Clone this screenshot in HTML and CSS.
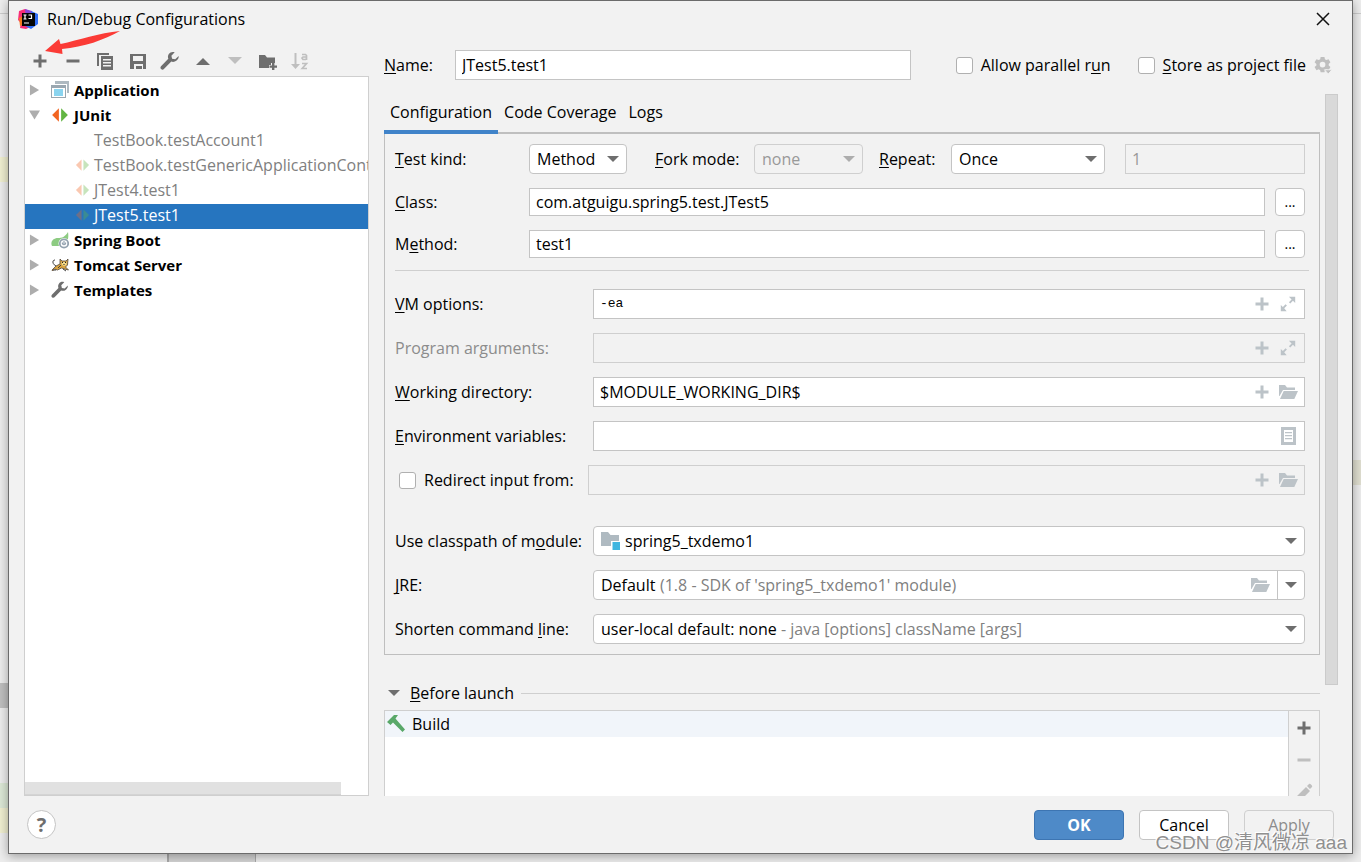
FILE: index.html
```html
<!DOCTYPE html>
<html lang="en">
<head>
<meta charset="utf-8">
<title>Run/Debug Configurations</title>
<link rel="stylesheet" href="styles.css">
</head>
<body>
<svg class="defs" aria-hidden="true">
  <symbol id="plus" viewBox="0 0 20 20"><path d="M8.500 3.500h3v5h5v3h-5v5h-3v-5h-5v-3h5z"/></symbol>
  <symbol id="minus" viewBox="0 0 20 20"><path d="M3.500 8.500h13v3h-13z"/></symbol>
  <symbol id="wrench" viewBox="0 0 20 20"><path d="M18.700 5.100l-3.500 3.200-3.100-.6-.7-2.900 3.300-3.500c-2.200-.8-4.600-.2-5.900 1.700-1 1.500-1.100 3.200-.5 4.700l-7.300 7.500c-.8.9-.7 2 .1 2.800s2 .9 2.800.1l7.400-7.500c1.700.6 3.700.3 5.300-1 1.500-1.200 2.300-2.900 2.100-4.500z"/></symbol>
  <symbol id="down" viewBox="0 0 12 8"><path d="M0 1h12L6 7z"/></symbol>
  <symbol id="right" viewBox="0 0 12 12"><path d="M1 0l10 6-10 6z"/></symbol>
  <symbol id="expand" viewBox="0 0 20 20"><path d="M11 2h7v7l-2.500-2.500-3 3-1.500-1.500 3-3zM2 18v-7l2.300 2.300 3-3 1.500 1.500-3 3L8.500 18z"/></symbol>
  <symbol id="folder" viewBox="0 0 20 20"><path d="M1 3h6l2 2.500h8V8H5l-3.500 6H1zM5.700 9H20l-3.700 8H2z"/></symbol>
  <symbol id="junit" viewBox="0 0 16 14"><path class="orange" d="M7 1v12L1 7z"/><path class="green" d="M9 1v12l6-6z"/></symbol>
</svg>

<div class="backdrop" aria-hidden="true">
  <i class="rule-top"></i><i class="mark mark-cream"></i><i class="mark mark-grey"></i><i class="mark mark-green"></i><i class="mark mark-yellow"></i><i class="mark mark-right"></i><i class="mark-bottom"></i>
</div>

<main class="dialog">
  <header class="titlebar">
    <svg class="logo" viewBox="0 0 20 20"><path fill="#f92d78" d="M1 2l6-2 7 3 2 13-8 4-6-1 1-5-3-3z"/><path fill="#f47b20" d="M1 9l4-2 2 8-5 2z"/><path fill="#8b45d8" d="M7 0l7 2 3 8-9 0z"/><path fill="#306df5" d="M13 2l7 3v10l-7 5-6-3 8-3z"/><path fill="#050505" d="M4 4h13v13H4z"/><path fill="none" stroke="#fff" stroke-width="1.200" d="M5.500 6h3M7 6v4M5.500 10h3M10.500 6h3v3.500h-3M6 14h5"/></svg>
    <h1>Run/Debug Configurations</h1>
    <button class="close" aria-label="Close"><svg viewBox="0 0 14 14"><path d="M1 1l12 12M13 1L1 13"/></svg></button>
  </header>

  <div class="body">
    <aside class="side">
      <div class="toolbar">
        <button aria-label="Add"><svg><use href="#plus"/></svg></button>
        <button aria-label="Remove"><svg><use href="#minus"/></svg></button>
        <button aria-label="Copy"><svg viewBox="0 0 20 20"><path d="M2 2h12v2H4v11H2z"/><path fill-rule="evenodd" d="M6 5h12v14H6zM8 8v1.500h8V8zm0 3v1.500h8V11zm0 3v1.500h8V14z"/></svg></button>
        <button aria-label="Save"><svg viewBox="0 0 20 20"><path fill-rule="evenodd" d="M2 3h16v15H2zM5 5v5h10V5zm1 8v5h2v-3h6v3h1v-5z"/><path d="M9 16h3v2H9z"/></svg></button>
        <button aria-label="Edit templates"><svg><use href="#wrench"/></svg></button>
        <button aria-label="Move up"><svg viewBox="0 0 20 20"><path d="M3 14l7-7 7 7z"/></svg></button>
        <button aria-label="Move down" disabled><svg viewBox="0 0 20 20"><path d="M3 6h14l-7 7z"/></svg></button>
        <button aria-label="Create folder"><svg viewBox="0 0 20 20"><path d="M1 4h6l2 2.500h8V12h-4v2h-2v3H1z"/><path d="M14 12h2.400v2.500H19v2.300h-2.600V19H14v-2.200h-2.500v-2.300H14z"/></svg></button>
        <button aria-label="Sort" disabled><svg viewBox="0 0 20 20"><path d="M4.500 2h2v11H10l-4.500 5L1 13h3.500z"/><path fill="none" stroke="currentColor" stroke-width="1.700" d="M12 3.500h3.500l1 1V9M16.500 6h-3.500l-1 1 1 1.500h2.500l1-1M12 12.500h4.500l-4.300 5H17"/></svg></button>
      </div>
      <nav class="tree" aria-label="Configurations">
        <ul>
          <li class="group"><svg class="twist"><use href="#right"/></svg><svg class="icon" viewBox="0 0 18 18"><path fill="#aeb9c0" d="M4 0h14v12h-2V3H4z"/><path fill="#9aa7b0" fill-rule="evenodd" d="M0 4h15v13H0zM1 7v9h13V7z"/><path fill="#fff" d="M1 7h13v9H1z"/><path fill="#8ad4ef" d="M3 8h9v7H3z"/></svg><span>Application</span></li>
          <li class="group"><svg class="twist open" viewBox="0 0 12 12"><path d="M0 1h12L6 11z"/></svg><svg class="icon"><use href="#junit"/></svg><span>JUnit</span></li>
          <li class="leaf"><svg class="hidden"></svg><span>TestBook.testAccount1</span></li>
          <li class="leaf"><svg><use href="#junit"/></svg><span>TestBook.testGenericApplicationContext</span></li>
          <li class="leaf"><svg><use href="#junit"/></svg><span>JTest4.test1</span></li>
          <li class="leaf selected"><svg><use href="#junit"/></svg><span>JTest5.test1</span></li>
          <li class="group"><svg class="twist"><use href="#right"/></svg><svg class="icon" viewBox="0 0 18 18"><path fill="#8dcb82" d="M17 1c1 6 0 13-8 14H1c-2-4 1-8 6-8 4 0 7-1 10-6z"/><circle cx="13" cy="12.500" r="5.500" fill="#fff"/><circle cx="13" cy="12.500" r="4.200" fill="#fff" stroke="#93a2af" stroke-width="1.800"/><path fill="none" stroke="#93a2af" stroke-width="1.200" d="M11.500 11.500c-1 3 4 3 3 0M13 10v3"/></svg><span>Spring Boot</span></li>
          <li class="group"><svg class="twist"><use href="#right"/></svg><svg class="icon" viewBox="0 0 18 18"><path fill="#d9a441" stroke="#54483a" stroke-width=".8" d="M1 14l4-4 4-2V3l2 2h4l2-2-.5 6-2 2 3 3-4-1-3-1-4 2-3-1-2 2z"/><path fill="none" stroke="#444" stroke-width="1" d="M5 10C1 8 1 4 4 4M7 12l3-3M2 14h3M12 13l3 2"/><path fill="#f3da8b" d="M10.500 6h5v3l-2.500 1-2-1z"/><path fill="#222" d="M11 6h1v1h-1zm3 0h1v1h-1zm-1.500 2h1v1h-1z"/></svg><span>Tomcat Server</span></li>
          <li class="group"><svg class="twist"><use href="#right"/></svg><svg class="icon dark"><use href="#wrench"/></svg><span>Templates</span></li>
        </ul>
        <div class="hscroll"></div>
      </nav>
    </aside>

    <section class="content">
      <div class="namebar">
        <label for="name"><u>N</u>ame:</label>
        <input id="name" class="box" type="text" value="JTest5.test1">
        <label class="check parallel"><input type="checkbox"><span>Allow parallel r<u>u</u>n</span></label>
        <label class="check"><input type="checkbox"><span><u>S</u>tore as project file</span></label>
        <button class="gear" aria-label="Storage options"><svg viewBox="0 0 20 20"><path fill-rule="evenodd" d="M7 1h4l.5 2.500 1.500.8 2.300-1 2 3.400-1.800 1.700v1.500l1.800 1.700-2 3.400-2.300-1-1.500.9L11 17H7l-.5-2.100-1.500-.9-2.400 1-2-3.400 1.900-1.700V8.400L.6 6.700l2-3.400 2.400 1 1.500-.8zM9 6a3 3 0 100 6 3 3 0 000-6z"/><path stroke="#f2f2f2" d="M11 14.500h8l-4 4.500z"/></svg></button>
      </div>

      <div class="viewport">
        <div class="scrolled">
          <div class="tabs" role="tablist">
            <button role="tab" aria-selected="true">Configuration</button>
            <button role="tab" aria-selected="false">Code Coverage</button>
            <button role="tab" aria-selected="false">Logs</button>
          </div>
          <div class="pane">
            <div class="row narrow">
              <label for="kind"><u>T</u>est kind:</label>
              <div class="field combo kind"><select id="kind"><option>Method</option></select><svg class="arrow"><use href="#down"/></svg></div>
              <label class="fork-label" for="fork"><u>F</u>ork mode:</label>
              <div class="field combo fork off"><select id="fork" disabled><option>none</option></select><svg class="arrow"><use href="#down"/></svg></div>
              <label class="repeat-label" for="repeat"><u>R</u>epeat:</label>
              <div class="field combo repeat"><select id="repeat"><option>Once</option></select><svg class="arrow"><use href="#down"/></svg></div>
              <input class="box count" aria-label="Repeat count" type="text" value="1" disabled>
            </div>
            <div class="row narrow short">
              <label for="class"><u>C</u>lass:</label>
              <input id="class" class="box" type="text" value="com.atguigu.spring5.test.JTest5">
              <button class="btn more" aria-label="Choose class">...</button>
            </div>
            <div class="row narrow short">
              <label for="method">M<u>e</u>thod:</label>
              <input id="method" class="box" type="text" value="test1">
              <button class="btn more" aria-label="Choose method">...</button>
            </div>
            <hr>
            <div class="row">
              <label for="vm"><u>V</u>M options:</label>
              <div class="field"><input id="vm" class="mono" type="text" value="-ea"><button aria-label="Insert macro"><svg><use href="#plus"/></svg></button><button aria-label="Expand"><svg class="small"><use href="#expand"/></svg></button></div>
            </div>
            <div class="row">
              <label class="muted" for="args">Program arguments:</label>
              <div class="field off"><input id="args" type="text" disabled><button aria-label="Insert macro"><svg><use href="#plus"/></svg></button><button aria-label="Expand"><svg class="small"><use href="#expand"/></svg></button></div>
            </div>
            <div class="row">
              <label for="dir"><u>W</u>orking directory:</label>
              <div class="field"><input id="dir" type="text" value="$MODULE_WORKING_DIR$"><button aria-label="Insert macro"><svg><use href="#plus"/></svg></button><button aria-label="Browse"><svg><use href="#folder"/></svg></button></div>
            </div>
            <div class="row">
              <label for="env"><u>E</u>nvironment variables:</label>
              <div class="field"><input id="env" type="text"><button aria-label="Edit variables"><svg viewBox="0 0 20 20"><path fill-rule="evenodd" d="M3 1h15v18H3zM6 4v12h9V4z"/><path d="M7 6h7v1.300H7zm0 3h7v1.300H7zm0 3h7v1.300H7z"/></svg></button></div>
            </div>
            <div class="row redirect">
              <label class="check"><input type="checkbox"><span>Redirect input from:</span></label>
              <div class="field off"><input aria-label="Input file" type="text" disabled><button aria-label="Insert macro"><svg><use href="#plus"/></svg></button><button aria-label="Browse"><svg><use href="#folder"/></svg></button></div>
            </div>
            <div class="row spaced">
              <label for="module">Use classpath of m<u>o</u>dule:</label>
              <div class="field combo"><svg class="module" viewBox="0 0 20 20"><path fill="#afbac1" d="M0 1h7l2.500 3H18v6h-8v5H0z"/><path fill="#40b6e0" d="M11.500 11H19v8h-7.500z"/></svg><select id="module" class="wide"><option>spring5_txdemo1</option></select><svg class="arrow"><use href="#down"/></svg></div>
            </div>
            <div class="row">
              <label for="jre"><u>J</u>RE:</label>
              <div class="field combo split"><select id="jre"><option>Default</option></select><span class="hint">(1.8 - SDK of 'spring5_txdemo1' module)</span><button aria-label="Browse"><svg><use href="#folder"/></svg></button><span class="drop"><svg class="arrow"><use href="#down"/></svg></span></div>
            </div>
            <div class="row">
              <label for="shorten">Shorten command <u>l</u>ine:</label>
              <div class="field combo"><select id="shorten"><option>user-local default: none</option></select><span class="hint">- java [options] className [args]</span><svg class="arrow"><use href="#down"/></svg></div>
            </div>
          </div>
          <button class="before"><svg><use href="#down"/></svg><span><u>B</u>efore launch</span></button>
          <div class="tasks">
            <ul><li><svg viewBox="0 0 20 20"><path fill="#59a869" d="M1 8l7-7h4L9.500 4.500l.8 1L19 15.500 16.500 18 7 8.500 4.500 11z"/></svg><span>Build</span></li></ul>
            <div class="task-tools">
              <button aria-label="Add task"><svg><use href="#plus"/></svg></button>
              <button aria-label="Remove task" disabled><svg><use href="#minus"/></svg></button>
              <button aria-label="Edit task" disabled><svg viewBox="0 0 20 20"><path d="M3 14l9-9 4 4-9 9H3zM13 4l2-2c1-1 4 2 3 3l-2 2z"/></svg></button>
            </div>
          </div>
        </div>
        <div class="vscroll"></div>
      </div>
    </section>
  </div>

  <footer>
    <button class="help" aria-label="Help">?</button>
    <button class="btn primary">OK</button>
    <button class="btn">Cancel</button>
    <button class="btn" disabled>Apply</button>
  </footer>
</main>

<svg class="pointer" viewBox="0 0 80 26" aria-hidden="true"><path fill="#fb3b36" d="M1 20L15 8l1.500 5C35 9 55 2 76 0 60 9 40 16 18 18l.5 5z"/></svg>
<div class="watermark">CSDN @清风微凉 aaa</div>
</body>
</html>
```
FILE: styles.css
```css
* { box-sizing: border-box; }
body {
  margin: 0;
  height: 100vh;
  padding: 0 8px 8px;
  overflow: hidden;
  position: relative;
  display: flex;
  background: #ededed;
  color: #000;
  font: 16px/20px "Open Sans", "Noto Sans", sans-serif;
}
button, input, select { font: inherit; color: inherit; margin: 0; padding: 0; }
button { border: 0; background: none; }
svg { display: block; fill: currentColor; flex: none; }
ul { list-style: none; margin: 0; padding: 0; }
u { text-underline-offset: 2px; text-decoration-skip-ink: none; }
.defs { position: absolute; width: 0; height: 0; }
.orange { fill: #f26522; }
.green { fill: #62b543; }

.backdrop i { position: absolute; }
.rule-top { left: 0; right: 0; top: 13px; height: 1px; background: #ccc; }
.mark { left: 0; width: 8px; height: 25px; }
.mark-cream { top: 157px; background: #f0efd0; }
.mark-grey { top: 683px; background: #bfbfbf; }
.mark-green { top: 783px; background: #dce8d6; }
.mark-yellow { top: 808px; background: #f0efd0; }
.backdrop .mark-right { left: auto; right: 0; top: 460px; background: #e0dfd0; }
.mark-bottom { left: 167px; bottom: 0; width: 89px; height: 8px; background: #d4d4d4; border-left: 2px solid #aaa; border-right: 1px solid #aaa; }

.dialog {
  position: relative;
  flex: 1;
  min-width: 0;
  display: flex;
  flex-direction: column;
  background: #f2f2f2;
  border: 1px solid #6b6b6b;
  box-shadow: 0 2px 10px rgba(0, 0, 0, .35);
}
.titlebar { display: flex; align-items: center; height: 36px; padding: 0 22px 0 9px; }
.titlebar h1 { flex: 1; margin: 0 0 0 9px; font-size: 16px; font-weight: 400; }
.logo { width: 20px; height: 20px; }
.close svg { width: 14px; height: 14px; fill: none; stroke: #111; stroke-width: 1.5; }

.body { flex: 1; min-height: 0; display: flex; gap: 15px; padding: 0 14px 0 15px; }
.side { width: 345px; flex: none; display: flex; flex-direction: column; }
.toolbar { width: 286px; height: 39px; padding: 14px 0 5px 6px; display: flex; align-items: center; justify-content: space-between; color: #6e6e6e; }
.toolbar svg { width: 20px; height: 20px; }
.toolbar button { height: 20px; }
button:disabled { color: #bfbfbf; }
.tree { flex: 1; min-height: 0; display: flex; flex-direction: column; justify-content: space-between; padding-top: 2px; background: #fff; border: 1px solid #cfcfcf; overflow: hidden; }
.tree li { height: 25px; padding-bottom: 3px; display: flex; align-items: center; white-space: nowrap; }
.group { padding-left: 4px; font-weight: 700; font-size: 15px; }
.twist { width: 11px; height: 12px; color: #adadad; }
.group .icon { width: 18px; height: 18px; margin: 0 5px 0 11px; }
.dark { color: #6e6e6e; }
.leaf { padding-left: 50px; gap: 4px; color: #808080; }
.leaf svg { width: 15px; height: 14px; opacity: .35; }
.leaf.selected { background: #2675bf; color: #fff; }
.hscroll { width: 92%; height: 13px; background: #e1e1e1; border-bottom: 1px solid #d4d4d4; }

.content { flex: 1; min-width: 0; display: flex; flex-direction: column; }
.namebar { display: flex; align-items: center; height: 30px; margin: 13px 5px 14px 0; }
.namebar > label:first-child { width: 71px; }
.box { flex: 1; min-width: 0; height: 30px; padding: 0 6px; background: #fff; border: 1px solid #c4c4c4; border-radius: 0; }
.box:disabled { background: #f2f2f2; border-color: #cfcfcf; color: #999; }
.check { display: flex; align-items: center; gap: 8px; white-space: nowrap; }
.check input { appearance: none; width: 17px; height: 17px; background: #fff; border: 1px solid #b0b0b0; border-radius: 3px; }
.parallel { margin: 0 27px 0 45px; }
.gear { margin-left: 8px; color: #bfbfbf; }
.gear svg { width: 19px; height: 19px; }

.viewport { flex: 1; min-height: 0; overflow: hidden; display: flex; gap: 5px; }
.scrolled { flex: 1; min-width: 0; }
.vscroll { width: 13px; height: 591px; background: #d9d9d9; border: 1px solid #cbcbcb; }
.tabs { display: flex; height: 40px; border-bottom: 2px solid #bfbfbf; }
.tabs button { height: 40px; padding: 0 6px; border-bottom: 4px solid transparent; }
.tabs button[aria-selected="true"] { border-color: #4083c9; }
.pane { display: flex; flex-direction: column; gap: 14px; padding: 10px 14px 10px 10px; border: 1px solid #bfbfbf; border-top: 0; }
.row { display: flex; align-items: center; height: 30px; }
.row > label:first-child { width: 198px; flex: none; white-space: nowrap; }
.row.narrow > label:first-child { width: 134px; }
.row.redirect > label:first-child { width: 193px; padding-left: 4px; }
.row.short, .short .box, .short .btn { height: 28px; }
.row.spaced { margin-top: 17px; }
.muted { color: #8c8c8c; }
hr { width: calc(100% + 4px); margin: -2px -4px 4px 0; border: 0; border-top: 1px solid #cfcfcf; }

.field { flex: 1; min-width: 0; height: 30px; display: flex; align-items: center; gap: 6px; padding: 0 6px; background: #fff; border: 1px solid #c4c4c4; }
.field input { flex: 1; min-width: 0; border: 0; background: none; }
.field .mono { font-family: "Liberation Mono", monospace; font-size: 13px; }
.field button { color: #bcc3c8; }
.field button svg { width: 20px; height: 20px; }
.field button .small { padding: 1px; }
.field.off { background: #f2f2f2; border-color: #cfcfcf; color: #999; }
.field.combo { padding: 0 7px; border-radius: 4px; gap: 4px; }
.combo select { appearance: none; border: 0; background: none; opacity: 1; }
.arrow { width: 12px; height: 8px; margin-left: auto; color: #6e6e6e; }
.off .arrow { color: #adadad; }
.wide { flex: 1; }
.module { width: 20px; height: 20px; }
.hint { color: #808080; white-space: nowrap; }
.split button { margin: 0 3px 0 auto; }
.field.split { padding-right: 0; }
.drop { align-self: stretch; display: flex; align-items: center; padding: 0 7px; border-left: 1px solid #c4c4c4; }
.field.kind { flex: none; width: 98px; }
.field.fork { flex: none; width: 109px; }
.field.repeat { flex: none; width: 154px; }
.fork-label { width: 99px; margin-left: 28px; }
.repeat-label { width: 72px; margin-left: 16px; }
.count { margin-left: 20px; }

.btn { width: 90px; height: 30px; background: #fff; border: 1px solid #c4c4c4; border-radius: 4px; }
.btn.more { width: 30px; margin-left: 10px; font-size: 14px; }
.btn:disabled { background: #f2f2f2; border-color: #cfcfcf; color: #8c8c8c; }
.btn.primary { background: #4e8ac8; border-color: #3d75b2; color: #fff; font-weight: 700; }

.before { display: flex; align-items: center; width: 100%; margin: 28px 0 7px; padding-left: 4px; gap: 10px; }
.before::after { content: ""; flex: 1; height: 1px; margin-left: -3px; background: #cfcfcf; }
.before svg { width: 12px; height: 8px; color: #6e6e6e; }
.tasks { display: flex; border: 1px solid #cfcfcf; height: 140px; }
.tasks ul { flex: 1; background: #fff; }
.tasks li { height: 26px; display: flex; align-items: center; gap: 6px; padding: 0 1px 0 1px; background: #f1f5fa; }
.tasks li svg { width: 20px; height: 20px; }
.task-tools { width: 31px; padding-top: 7px; display: flex; flex-direction: column; align-items: center; gap: 12px; border-left: 1px solid #cfcfcf; color: #6e6e6e; }
.task-tools svg { width: 20px; height: 20px; }

footer { display: flex; align-items: center; gap: 15px; height: 57px; padding: 0 18px; }
.help { width: 29px; height: 29px; margin-right: auto; background: #fff; border: 1px solid #c4c4c4; border-radius: 50%; color: #6e6e6e; font-size: 20px; font-weight: 700; }

.pointer { position: absolute; left: 44px; top: 31px; width: 80px; height: 26px; }
.watermark { position: absolute; right: 14px; bottom: 7px; font: 19px/24px "Liberation Sans", "Noto Sans CJK SC", sans-serif; color: rgba(130, 130, 130, .9); text-shadow: -1px -1px 0 #fff; }
```
